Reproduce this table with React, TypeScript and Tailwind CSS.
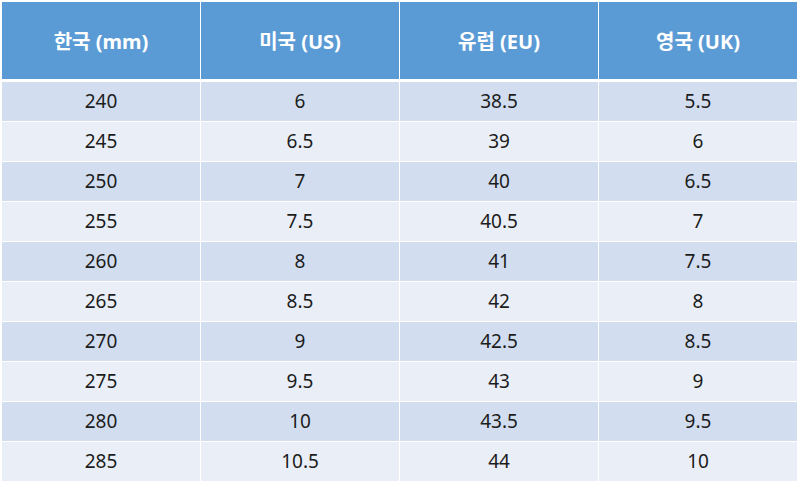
const headers = ['한국 (mm)', '미국 (US)', '유럽 (EU)', '영국 (UK)']

const rows = [
  ['240', '6', '38.5', '5.5'],
  ['245', '6.5', '39', '6'],
  ['250', '7', '40', '6.5'],
  ['255', '7.5', '40.5', '7'],
  ['260', '8', '41', '7.5'],
  ['265', '8.5', '42', '8'],
  ['270', '9', '42.5', '8.5'],
  ['275', '9.5', '43', '9'],
  ['280', '10', '43.5', '9.5'],
  ['285', '10.5', '44', '10'],
]

export default function App() {
  return (
    <div
      className="w-[800px] h-[484px] bg-white pt-[2px] pl-[2px]"
      style={{ fontFamily: '"Noto Sans", "Noto Sans CJK KR", sans-serif' }}
    >
      <div className="w-[795px] flex flex-col">
        {/* Header */}
        <div className="grid grid-cols-4 gap-px h-[77px] mb-[3px]">
          {headers.map(h => (
            <div
              key={h}
              className="bg-[#5b9bd5] flex items-center justify-center pt-[2px] text-white font-bold text-[20px]"
            >
              {h}
            </div>
          ))}
        </div>

        {/* Body */}
        <div className="flex flex-col gap-px">
          {rows.map((r, i) => (
            <div key={i} className="grid grid-cols-4 gap-px h-[39px]">
              {r.map((c, j) => (
                <div
                  key={j}
                  className={`${i % 2 === 0 ? 'bg-[#d2deef]' : 'bg-[#eaeff7]'} flex items-center justify-center text-[19px] text-[#1c1c1c]`}
                >
                  {c}
                </div>
              ))}
            </div>
          ))}
        </div>
      </div>
    </div>
  )
}
